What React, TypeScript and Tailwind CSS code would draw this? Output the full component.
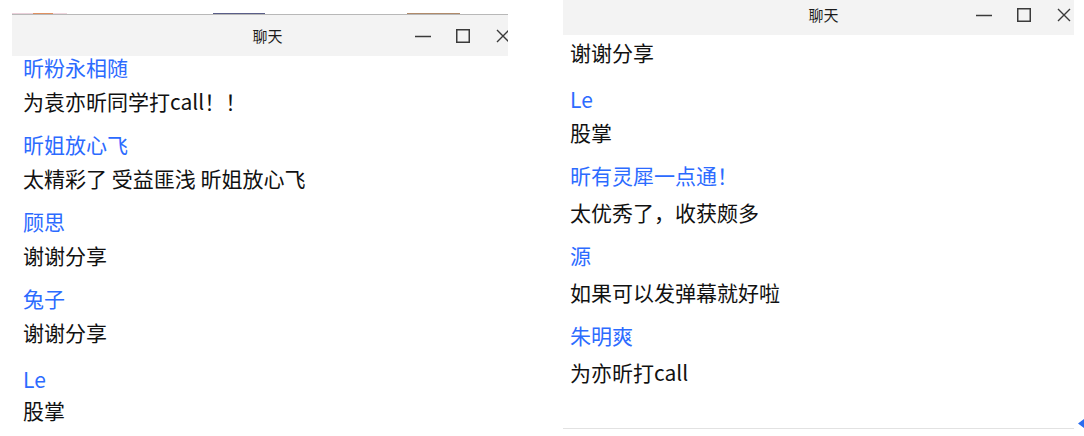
import React from "react";

const leftItems: [string, string][] = [
  ["昕粉永相随", "为袁亦昕同学打call！！"],
  ["昕姐放心飞", "太精彩了 受益匪浅 昕姐放心飞"],
  ["顾思", "谢谢分享"],
  ["兔子", "谢谢分享"],
  ["Le", "股掌"],
];

const rightItems: [string, string][] = [
  ["Le", "股掌"],
  ["昕有灵犀一点通！", "太优秀了，收获颇多"],
  ["源", "如果可以发弹幕就好啦"],
  ["朱明爽", "为亦昕打call"],
];

function TitleBar() {
  return (
    <div className="relative z-10 flex h-[41px] shrink-0 items-center bg-[#f3f3f3]">
      <div className="w-[98px]" />
      <div className="flex-1 pl-[10px] text-center text-[15px] leading-[20px] text-[#1b1b1b]">聊天</div>
      <div className="flex w-[98px] items-center gap-[24px] pr-[2px]">
        <svg width="16" height="16" viewBox="0 0 16 16">
          <line x1="0" y1="8.5" x2="16" y2="8.5" stroke="#3a3a3a" strokeWidth="1.5" />
        </svg>
        <svg width="16" height="16" viewBox="0 0 16 16">
          <rect x="1.75" y="1.75" width="12.5" height="12.5" fill="none" stroke="#3a3a3a" strokeWidth="1.5" />
        </svg>
        <svg width="16" height="16" viewBox="0 0 16 16">
          <path d="M2 2 L14 14 M14 2 L2 14" stroke="#3a3a3a" strokeWidth="1.4" />
        </svg>
      </div>
    </div>
  );
}

function Entry({ name, text, gap, latinGap }: { name: string; text: string; gap: string; latinGap: string }) {
  // latin-only names sit a little lower in the original
  const latin = /^[A-Za-z]+$/.test(name);
  return (
    <div className="mb-[15px]">
      <div
        className={`${latin ? `pt-[4px] ${latinGap}` : gap} text-[21px] leading-[28px] text-[#2c6bff] whitespace-nowrap`}
      >
        {name}
      </div>
      <div className="text-[21px] leading-[28px] text-[#111111] whitespace-nowrap">{text}</div>
    </div>
  );
}

export default function App() {
  return (
    <div className="flex h-[436px] w-[1084px] overflow-hidden bg-white font-['Microsoft_YaHei','Noto_Sans_CJK_SC',sans-serif]">
      {/* left window, clipped on the right */}
      <div className="flex h-full w-[508px] shrink-0 flex-col overflow-hidden">
        <div className="flex h-[14px] shrink-0 items-end pl-[12px]">
          <div className="flex h-px w-full">
            <div className="w-[21px] bg-[#ead0da]" />
            <div className="w-[20px] bg-[#e09060]" />
            <div className="w-[14px] bg-[#efd6de]" />
            <div className="w-[146px]" />
            <div className="w-[52px] bg-[#5a5e88]" />
            <div className="w-[142px]" />
            <div className="w-[53px] bg-[#b08a6a]" />
          </div>
        </div>
        <div className="ml-[12px] flex w-[501px] flex-1 flex-col border-t border-[#b8b8b8]">
          <TitleBar />
          <div className="-mt-[3px] flex-1 pl-[11px]">
            {leftItems.map(([n, t], i) => (
              <Entry key={i} name={n} text={t} gap="mb-[6px]" latinGap="mb-[3px]" />
            ))}
          </div>
        </div>
      </div>

      {/* right window */}
      <div className="-mt-[6px] ml-[55px] flex h-[441px] w-[511px] shrink-0 flex-col">
        <TitleBar />
        <div className="h-[394px] border-b border-[#e2e2e2] bg-white pl-[7px] pt-[3px]">
          <div className="mb-[15px] text-[21px] leading-[28px] text-[#111111]">谢谢分享</div>
          {rightItems.map(([n, t], i) => (
            <Entry key={i} name={n} text={t} gap="mb-[9px]" latinGap="mb-[5px]" />
          ))}
        </div>
      </div>

      {/* edge handle */}
      <div className="flex flex-1 flex-col justify-end pb-[8px] pl-[4px]">
        <svg width="6" height="9" viewBox="0 0 6 9">
          <path d="M6 0 L0 4.5 L6 9 Z" fill="#2a6cf0" />
        </svg>
      </div>
    </div>
  );
}
